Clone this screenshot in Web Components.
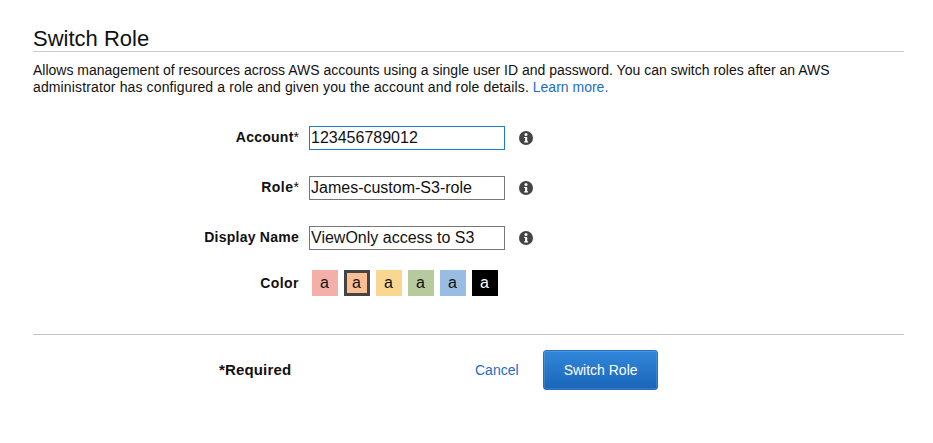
<!DOCTYPE html>
<html lang="en"><head><meta charset="utf-8"><title>Switch Role</title>
<style>html,body{margin:0;padding:0;background:#fff;font-family:"Liberation Sans",Arial,sans-serif;color:#000}</style>
</head><body>
<switch-role-page>
  <page-header title="Switch Role">Allows management of resources across AWS accounts using a single user ID and password. You can switch roles after an AWS <span style="letter-spacing:.13px">administrator has configured a role and given you the account and role details.</span> <a href="#" style="color:#1b6ec2;text-decoration:none">Learn more.</a></page-header>
  <form-row label="Account" req value="123456789012" focused></form-row>
  <form-row label="Role" req track=".5px" value="James-custom-S3-role"></form-row>
  <form-row label="Display Name" value="ViewOnly access to S3"></form-row>
  <color-row></color-row>
  <form-footer></form-footer>
</switch-role-page>
<script>
function def(name, css, html){
  customElements.define(name, class extends HTMLElement{
    connectedCallback(){
      if(this.shadowRoot) return;
      const r=this.attachShadow({mode:'open'});
      r.innerHTML='<style>'+css+'</style>'+(typeof html==='function'?html(this):html);
    }
  });
}
def('switch-role-page',':host{display:block;width:871px;padding:26px 29px 0 33px}','<slot></slot>');
def('page-header',`:host{display:block;margin-bottom:30px}
h1{margin:0;font:400 22px/25px "Liberation Sans",Arial,sans-serif;color:#111;height:25px;border-bottom:1px solid #ccc}
p{margin:10px 0 0;font:14px/17px "Liberation Sans",Arial,sans-serif;color:#111}`,
 h=>`<h1>${h.getAttribute('title')}</h1><p><slot></slot></p>`);
const infoIcon=`<svg width="14" height="14" viewBox="0 0 14 14" aria-hidden="true"><circle cx="7" cy="7" r="7" fill="#444"/><circle cx="7" cy="3.4" r="1.5" fill="#fff"/><path d="M5.2 5.9H8.2V10.2H9.1V11.4H5.2V10.2H6.1V7.1H5.2Z" fill="#fff"/></svg>`;
def('form-row',`:host{display:grid;grid-template-columns:266px 196px 14px;column-gap:10px;align-items:center;height:24px;margin-bottom:26px}
label{font:700 14px/17px "Liberation Sans",Arial,sans-serif;color:#111;text-align:right;letter-spacing:.25px;margin-top:-1px}
i{font-style:normal;font-weight:400;letter-spacing:0}
input{box-sizing:border-box;width:196px;height:24px;margin:0;padding:0 1px;border:1px solid #777;border-radius:0;outline:0;background:#fff;color:#111;font:16px "Liberation Sans",Arial,sans-serif}
input.f{border-color:#1a7dc9}
svg{display:block;margin-left:4px;margin-top:-1px}
span{display:block;width:14px}`,
 h=>`<label style="${h.hasAttribute('track')?'letter-spacing:'+h.getAttribute('track'):''}">${h.getAttribute('label')}${h.hasAttribute('req')?'<i>*</i>':''}</label><input class="${h.hasAttribute('focused')?'f':''}" value="${h.getAttribute('value')}"><span>${infoIcon}</span>`);
def('color-row',`:host{display:grid;grid-template-columns:266px auto;column-gap:13px;align-items:center;height:26px;margin-top:-6px}
label{font:700 14px/17px "Liberation Sans",Arial,sans-serif;color:#111;text-align:right;letter-spacing:.45px}
div{display:flex;gap:6px}
b{box-sizing:border-box;display:flex;align-items:center;justify-content:center;width:26px;height:26px;padding-right:1px;font:400 16px/1 "Liberation Sans",Arial,sans-serif;color:#111}
b.s{border:3px solid #444}`,
 ()=>`<label>Color</label><div><b style="background:#f2b0a9">a</b><b class="s" style="background:#fbbf93">a</b><b style="background:#fad791">a</b><b style="background:#b7ca9d">a</b><b style="background:#99bce3">a</b><b style="background:#000;color:#fff">a</b></div>`);
def('form-footer',`:host{display:flex;align-items:center;box-sizing:border-box;margin-top:38px;border-top:1px solid #c4c4c4;padding-top:15px;height:56px}
.req{margin-left:186px;margin-top:-1px;font:700 15px/17px "Liberation Sans",Arial,sans-serif;letter-spacing:.15px;color:#111;width:256px}
a{font:14px/17px "Liberation Sans",Arial,sans-serif;color:#1b6ec2;text-decoration:none;margin-right:24px}
button{box-sizing:border-box;width:115px;height:40px;padding:0 0 0 1px;border:1px solid #2a70bf;border-radius:3px;background:linear-gradient(#3287d9,#1a66b9);box-shadow:inset 0 0 0 1px rgba(255,255,255,.12);color:#fff;font:14px "Liberation Sans",Arial,sans-serif}`,
 `<span class="req">*Required</span><a href="#">Cancel</a><button type="button">Switch Role</button>`);
</script>
</body></html>
